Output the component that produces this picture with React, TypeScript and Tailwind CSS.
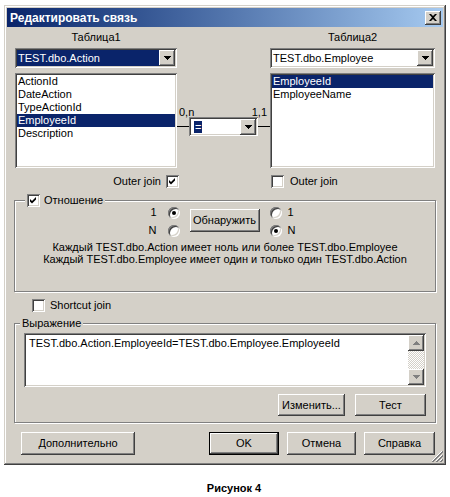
import React from "react";

const raised =
  "shadow-[inset_-1px_-1px_#404040,inset_1px_1px_#ffffff,inset_-2px_-2px_#808080,inset_2px_2px_#d4d0c8]";
const sunken =
  "shadow-[inset_1px_1px_#808080,inset_-1px_-1px_#ffffff,inset_2px_2px_#404040,inset_-2px_-2px_#d4d0c8]";

function Arrow({ color = "#000000", up = false }: { color?: string; up?: boolean }) {
  return (
    <svg width="7" height="4" viewBox="0 0 7 4" className={up ? "rotate-180" : ""}>
      <path d="M0 0h7v1h-1v1h-1v1h-1v1h-1v-1h-1v-1h-1v-1h-1z" fill={color} />
    </svg>
  );
}

function DropButton() {
  return (
    <div className={`w-[16px] h-[16px] shrink-0 bg-[#d4d0c8] ${raised} flex items-center justify-center`}>
      <Arrow />
    </div>
  );
}

function Combo({ text, highlight }: { text: string; highlight?: boolean }) {
  return (
    <div className={`h-[20px] bg-white ${sunken} p-[2px] flex items-center`}>
      <div
        className={`flex-1 h-full flex items-center pl-[1px] leading-[13px] ${
          highlight ? "bg-[#0a246a] text-white" : ""
        }`}
      >
        {text}
      </div>
      <DropButton />
    </div>
  );
}

function ListBox({ items, selected }: { items: string[]; selected: number }) {
  return (
    <div className={`h-[95px] bg-white ${sunken} p-[2px] flex flex-col`}>
      {items.map((item, i) => (
        <div
          key={item}
          className={`h-[13px] leading-[13px] pl-[1px] ${i === selected ? "bg-[#0a246a] text-white" : ""}`}
        >
          {item}
        </div>
      ))}
    </div>
  );
}

function Check({ checked }: { checked?: boolean }) {
  return (
    <div className={`w-[13px] h-[13px] shrink-0 bg-white ${sunken} flex items-center justify-center`}>
      {checked && (
        <svg width="13" height="13" viewBox="0 0 13 13">
          <polygon points="3,5 5,7 9,3 9,5.6 5,9.6 3,7.6" fill="#000000" />
        </svg>
      )}
    </div>
  );
}

function Radio({ checked }: { checked?: boolean }) {
  return (
    <div className={`w-[12px] h-[12px] shrink-0 rounded-full bg-white ${sunken} flex items-center justify-center`}>
      {checked && <div className="w-[4px] h-[4px] rounded-full bg-black" />}
    </div>
  );
}

function Button({ label, className = "", isDefault }: { label: string; className?: string; isDefault?: boolean }) {
  return (
    <div
      className={`bg-[#d4d0c8] flex items-center justify-center leading-[13px] ${
        isDefault ? "border border-black" : ""
      } ${className}`}
    >
      <div className={`w-full h-full flex items-center justify-center ${raised}`}>{label}</div>
    </div>
  );
}

export default function App() {
  return (
    <div className="w-[450px] h-[497px] bg-white pt-[5px] pl-[4px] font-['Liberation_Sans',Arial,sans-serif] text-[11px] text-black">
      <div className="relative w-[442px] h-[460px] bg-[#d4d0c8] p-[3px] flex flex-col shadow-[inset_-1px_-1px_#404040,inset_1px_1px_#d4d0c8,inset_-2px_-2px_#808080,inset_2px_2px_#ffffff]">
        {/* title bar */}
        <div className="h-[19px] shrink-0 bg-gradient-to-r from-[#0a246a] to-[#a6caf0] flex items-center justify-between pl-[3px] pr-[2px]">
          <span className="text-white font-bold text-[12px] leading-[14px]">Редактировать связь</span>
          <div className={`w-[16px] h-[14px] bg-[#d4d0c8] ${raised} flex items-center justify-center`}>
            <svg width="8" height="7" viewBox="0 0 8 7">
              <path d="M0 0h2l2 2 2-2h2L5 3.5 8 7H6L4 5 2 7H0l3-3.5z" fill="#000000" />
            </svg>
          </div>
        </div>

        <div className="px-[7px]">
          {/* tables */}
          <div className="ml-[1px] grid grid-cols-[162px_93px_165px] mt-[4px] leading-[13px]">
            <div className="text-center">Таблица1</div>
            <div />
            <div className="text-center">Таблица2</div>
          </div>
          <div className="ml-[1px] grid grid-cols-[162px_93px_165px] mt-[4px]">
            <Combo text="TEST.dbo.Action" highlight />
            <div />
            <Combo text="TEST.dbo.Employee" />
          </div>
          <div className="ml-[1px] grid grid-cols-[162px_93px_165px] mt-[5px]">
            <ListBox
              items={["ActionId", "DateAction", "TypeActionId", "EmployeeId", "Description"]}
              selected={3}
            />
            <div className="flex flex-col pt-[34px]">
              <div className="flex justify-between pl-[2px] pr-[3px] leading-[10px]">
                <span>0,n</span>
                <span>1,1</span>
              </div>
              <div className="flex items-center">
                <div className="flex-1 h-px bg-black" />
                <div className={`w-[69px] h-[19px] bg-white ${sunken} p-[2px] flex items-center`}>
                  <div className="flex-1 flex items-center pl-[3px]">
                    <span className="bg-[#0a246a] text-white leading-[12px] px-[1px]">=</span>
                  </div>
                  <DropButton />
                </div>
                <div className="flex-1 h-px bg-black" />
              </div>
            </div>
            <ListBox items={["EmployeeId", "EmployeeName"]} selected={0} />
          </div>

          {/* outer joins */}
          <div className="ml-[1px] grid grid-cols-[162px_93px_165px] mt-[7px] leading-[13px]">
            <div className="flex items-center justify-end gap-[5px] -mr-[2px]">
              <span>Outer join</span>
              <Check checked />
            </div>
            <div />
            <div className="flex items-center gap-[6px] pl-[1px]">
              <Check />
              <span>Outer join</span>
            </div>
          </div>

          {/* relation */}
          <fieldset className="mt-[6px] h-[98px] border border-[#808080] shadow-[inset_1px_1px_#ffffff,1px_1px_#ffffff]">
            <legend className="ml-[10px] px-[2px] bg-[#d4d0c8] flex items-center gap-[4px] leading-[13px]">
              <Check checked />
              <span>Отношение</span>
            </legend>
            <div className="flex justify-center pr-[6px] -mt-[1px]">
              <div className="flex flex-col gap-[5px]">
                <div className="flex items-center justify-end gap-[11px] h-[13px]">
                  <span>1</span>
                  <Radio checked />
                </div>
                <div className="flex items-center justify-end gap-[11px] h-[13px]">
                  <span>N</span>
                  <Radio />
                </div>
              </div>
              <Button label="Обнаружить" className="ml-[10px] mt-[3px] w-[70px] h-[23px]" />
              <div className="ml-[10px] flex flex-col gap-[5px]">
                <div className="flex items-center gap-[6px] h-[13px]">
                  <Radio />
                  <span>1</span>
                </div>
                <div className="flex items-center gap-[6px] h-[13px]">
                  <Radio checked />
                  <span>N</span>
                </div>
              </div>
            </div>
            <div className="mt-[4px] text-center leading-[12px]">
              <div>Каждый TEST.dbo.Action имеет ноль или более TEST.dbo.Employee</div>
              <div>Каждый TEST.dbo.Employee имеет один и только один TEST.dbo.Action</div>
            </div>
          </fieldset>

          {/* shortcut */}
          <div className="mt-[7px] ml-[18px] flex items-center gap-[5px] leading-[13px]">
            <Check />
            <span>Shortcut join</span>
          </div>

          {/* expression */}
          <fieldset className="mt-[5px] h-[106px] border border-[#808080] shadow-[inset_1px_1px_#ffffff,1px_1px_#ffffff]">
            <legend className="ml-[5px] px-[2px] bg-[#d4d0c8] leading-[13px]">Выражение</legend>
            <div className={`mt-[3px] mx-[9px] h-[54px] bg-white ${sunken} p-[2px] flex`}>
              <div className="flex-1 pl-[3px] pt-[2px] leading-[13px]">
                TEST.dbo.Action.EmployeeId=TEST.dbo.Employee.EmployeeId
              </div>
              <div className="w-[16px] flex flex-col bg-[repeating-conic-gradient(#ffffff_0_25%,#d4d0c8_0_50%)] bg-[length:2px_2px]">
                <div className={`h-[16px] bg-[#d4d0c8] ${raised} flex items-center justify-center`}>
                  <Arrow color="#808080" up />
                </div>
                <div className="flex-1" />
                <div className={`h-[16px] bg-[#d4d0c8] ${raised} flex items-center justify-center`}>
                  <Arrow color="#808080" />
                </div>
              </div>
            </div>
            <div className="mt-[7px] mr-[9px] flex justify-end gap-[10px]">
              <Button label="Изменить..." className="w-[67px] h-[22px]" />
              <Button label="Тест" className="w-[71px] h-[22px]" />
            </div>
          </fieldset>

          {/* dialog buttons */}
          <div className="mt-[9px] pl-[7px] pr-[1px] flex">
            <Button label="Дополнительно" className="w-[114px] h-[23px]" />
            <div className="ml-auto flex gap-[8px]">
              <Button label="OK" className="w-[70px] h-[23px]" isDefault />
              <Button label="Отмена" className="w-[69px] h-[23px]" />
              <Button label="Справка" className="w-[71px] h-[23px]" />
            </div>
          </div>
        </div>

        {/* size grip */}
        <svg className="absolute right-[3px] bottom-[3px]" width="12" height="12" viewBox="0 0 12 12">
          <path d="M11 1L1 11M11 5L5 11M11 9L9 11" stroke="#ffffff" strokeWidth="1" />
          <path d="M12 1L1 12M12 2L2 12M12 5L5 12M12 6L6 12M12 9L9 12M12 10L10 12" stroke="#808080" strokeWidth="1" />
        </svg>
      </div>

      <div className="mt-[17px] pl-[14px] text-center font-bold text-[11px] leading-[13px]">Рисунок 4</div>
    </div>
  );
}
